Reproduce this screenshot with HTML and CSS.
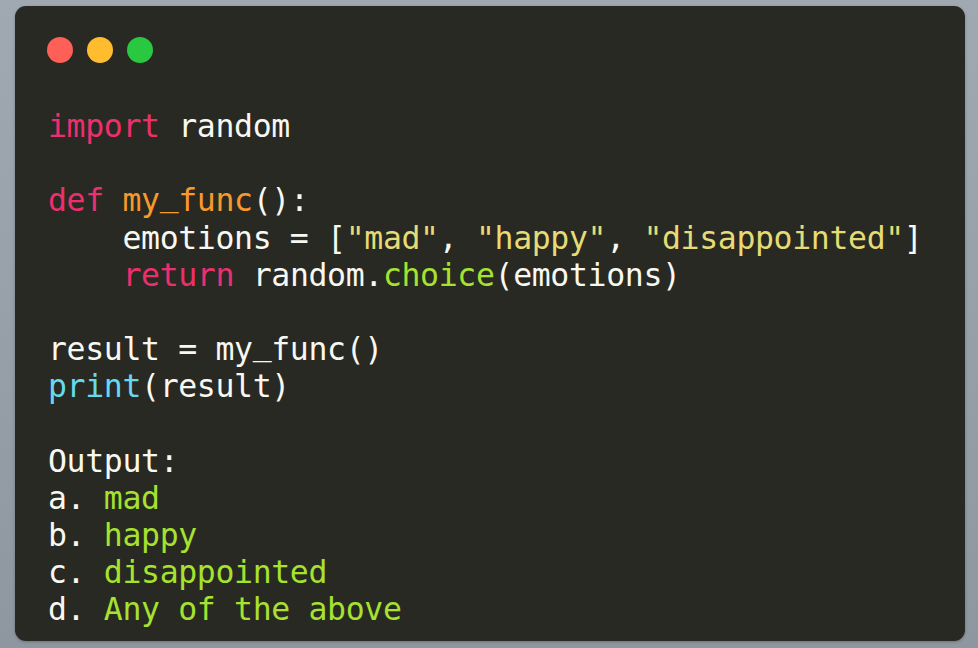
FILE: index.html
```html
<!DOCTYPE html>
<html>
<head>
<meta charset="utf-8">
<link rel="stylesheet" href="styles.css">
</head>
<body>
<div class="window">
  <div class="dots">
    <span class="dot red"></span>
    <span class="dot yellow"></span>
    <span class="dot green"></span>
  </div>
  <div class="code">
    <div class="ln"><span class="kw">import</span> random</div>
    <div class="ln blank"></div>
    <div class="ln"><span class="kw">def</span> <span class="fn">my<span class="us">_</span>func</span>():</div>
    <div class="ln">    emotions = [<span class="str">"mad"</span>, <span class="str">"happy"</span>, <span class="str">"disappointed"</span>]</div>
    <div class="ln">    <span class="kw">return</span> random.<span class="call">choice</span>(emotions)</div>
    <div class="ln blank"></div>
    <div class="ln">result = my<span class="us">_</span>func()</div>
    <div class="ln"><span class="bi">print</span>(result)</div>
    <div class="ln blank"></div>
    <div class="ln">Output:</div>
    <div class="ln">a. <span class="call">mad</span></div>
    <div class="ln">b. <span class="call">happy</span></div>
    <div class="ln">c. <span class="call">disappointed</span></div>
    <div class="ln">d. <span class="call">Any of the above</span></div>
  </div>
</div>
</body>
</html>
```
FILE: styles.css
```css
html, body {
  margin: 0;
  padding: 0;
}
body {
  width: 978px;
  height: 648px;
  background: linear-gradient(180deg, #a0a8b1 0%, #8e979f 100%);
  overflow: hidden;
}
.window {
  margin: 6px 0 0 15px;
  width: 950px;
  height: 635px;
  box-sizing: border-box;
  background: #282923;
  border-radius: 11px;
  padding: 31px 0 0 32px;
  box-shadow: 0 1px 3px rgba(0,0,0,0.25);
}
.dots {
  display: flex;
  gap: 14px;
}
.dot {
  width: 26px;
  height: 26px;
  border-radius: 50%;
}
.red { background: #fe5f57; }
.yellow { background: #febc2e; }
.green { background: #28c840; }
.code {
  margin: 45px 0 0 1px;
  font-family: "DejaVu Sans Mono", monospace;
  font-size: 31.5px;
  letter-spacing: -0.36px;
  line-height: 37.2px;
  color: #f8f8f2;
}
.ln {
  white-space: pre;
  height: 37.2px;
}
.us {
  display: inline-block;
  transform: translateY(-5px);
}
.kw { color: #ee2f6e; }
.fn { color: #f8992a; }
.str { color: #e6db74; }
.call { color: #a6e22e; }
.bi { color: #66d9ef; }
```
